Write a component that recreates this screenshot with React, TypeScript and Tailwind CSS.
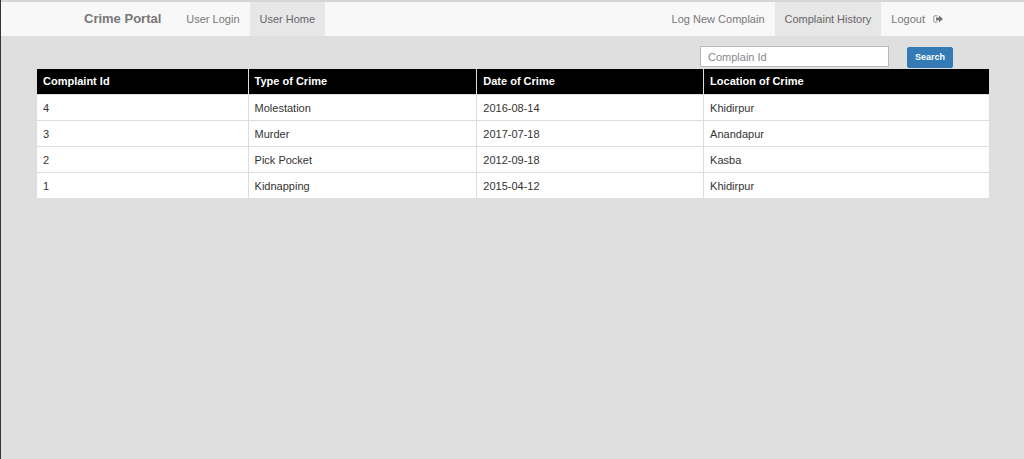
import React from "react";

const complaints = [
  { id: 4, type: "Molestation", date: "2016-08-14", location: "Khidirpur" },
  { id: 3, type: "Murder", date: "2017-07-18", location: "Anandapur" },
  { id: 2, type: "Pick Pocket", date: "2012-09-18", location: "Kasba" },
  { id: 1, type: "Kidnapping", date: "2015-04-12", location: "Khidirpur" },
];

const columns = [
  { label: "Complaint Id", width: "w-[22.2%]" },
  { label: "Type of Crime", width: "w-[24%]" },
  { label: "Date of Crime", width: "w-[23.8%]" },
  { label: "Location of Crime", width: "w-[30%]" },
];

function LogoutIcon() {
  return (
    <svg viewBox="0 0 20 16" className="h-2 w-2.5" aria-hidden="true">
      <path
        d="M9 1.500H4A2.500 2.500 0 0 0 1.500 4v8A2.500 2.500 0 0 0 4 14.500h5"
        fill="none"
        stroke="currentColor"
        strokeWidth="1.500"
      />
      <path d="M12 1L20 8l-8 7V11H6V5h6z" fill="currentColor" />
    </svg>
  );
}

function NavLink({ children, active }: { children: React.ReactNode; active?: boolean }) {
  return (
    <a
      href="#"
      aria-current={active ? "page" : undefined}
      className={
        active
          ? "flex items-center gap-2 bg-[#e7e7e7] px-[10px] text-[#666]"
          : "flex items-center gap-2 px-[10px] text-[#777]"
      }
    >
      {children}
    </a>
  );
}

export default function App() {
  return (
    <div className="min-h-screen border-l border-[#34343c] bg-[#dfdfdf] font-['Liberation_Sans',Arial,sans-serif] text-[11px] text-[#333]">
      <nav className="flex h-9 justify-between border-t-2 border-t-[#d6d6d6] bg-[#f8f8f8] pr-[71px] pl-[68px]">
        <div className="flex">
          <a href="#" className="flex items-center px-[15px] text-[13px] font-bold text-[#777]">
            Crime Portal
          </a>
          <NavLink>User Login</NavLink>
          <NavLink active>User Home</NavLink>
        </div>
        <div className="flex">
          <NavLink>Log New Complain</NavLink>
          <NavLink active>Complaint History</NavLink>
          <NavLink>
            Logout <LogoutIcon />
          </NavLink>
        </div>
      </nav>

      <main className="pt-[10px] pr-[34px] pl-[35px]">
        <form className="flex justify-end gap-[18px] pr-[37px]" onSubmit={(e) => e.preventDefault()}>
          <input
            type="text"
            aria-label="Complain Id"
            placeholder="Complain Id"
            className="h-[21px] w-[189px] border border-[#b8b8b8] bg-white px-[7px] placeholder:text-[#888]"
          />
          <button
            type="submit"
            className="mt-px h-[21px] w-[46px] rounded-[2px] border border-[#337ab7] bg-[#337ab7] text-[9px] font-bold text-white"
          >
            Search
          </button>
        </form>
        <table className="w-full table-fixed border-collapse bg-white text-left">
          <thead>
            <tr className="h-[26px] bg-black text-white">
              {columns.map((c) => (
                <th
                  key={c.label}
                  scope="col"
                  className={`${c.width} border border-[#ddd] px-[6px] font-bold`}
                >
                  {c.label}
                </th>
              ))}
            </tr>
          </thead>
          <tbody>
            {complaints.map((c) => (
              <tr key={c.id} className="h-[26px]">
                <td className="border border-[#ddd] px-[6px] pt-0.5">{c.id}</td>
                <td className="border border-[#ddd] px-[6px] pt-0.5">{c.type}</td>
                <td className="border border-[#ddd] px-[6px] pt-0.5">{c.date}</td>
                <td className="border border-[#ddd] px-[6px] pt-0.5">{c.location}</td>
              </tr>
            ))}
          </tbody>
        </table>
      </main>
    </div>
  );
}
